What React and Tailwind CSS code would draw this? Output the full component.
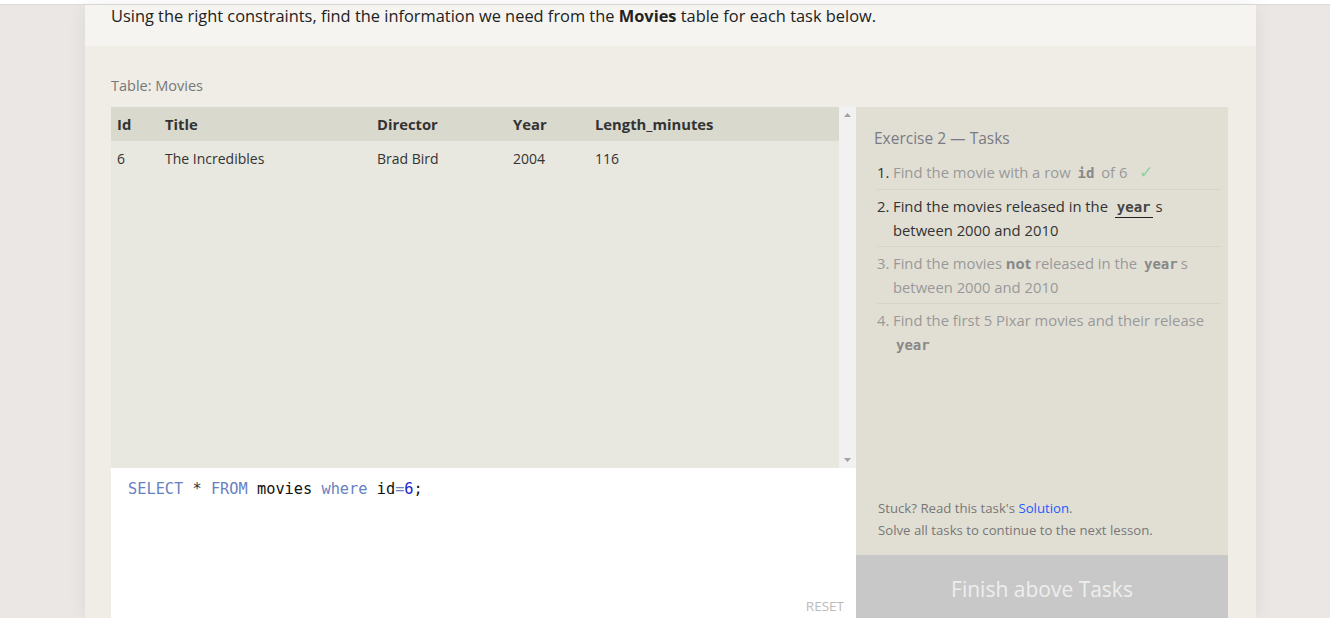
import React from "react";

const sans = { fontFamily: '"Open Sans", "Noto Sans", sans-serif' };
const mono = { fontFamily: '"DejaVu Sans Mono", "Liberation Mono", monospace' };

function Code({ children, className = "" }) {
  return (
    <span className={"font-bold text-[14px] leading-none " + className} style={mono}>
      {children}
    </span>
  );
}

export default function App() {
  return (
    <div className="w-[1330px] h-[618px] overflow-hidden bg-[#ebe7e4]" style={sans}>
      <div className="h-[5px] bg-white border-b border-[#dcdbd9]" />
      <div className="ml-[85px] w-[1171px] h-[613px] shadow-[0_0_18px_rgba(0,0,0,0.07)] flex flex-col">
        <div className="h-[41px] bg-[#f5f4f0] pl-[26px] text-[16.4px] leading-[22px] text-[#222]">
          Using the right constraints, find the information we need from the <b>Movies</b> table for each task below.
        </div>
        <div className="flex-1 bg-[#efede6] pl-[26px] pr-[28px] pt-[30px] flex flex-col">
          <div className="text-[14.5px] leading-[20px] text-[#777] h-[31px]">Table: Movies</div>
          <div className="flex flex-1">
            <div className="w-[745px] flex flex-col">
              <div className="h-[361px] flex bg-[#e8e7e0]">
                <div className="flex-1">
                  <table className="w-full text-[14px] text-[#333] border-collapse">
                    <thead>
                      <tr className="bg-[#d9d9cd] h-[34px] text-left text-[14.8px]">
                        <th className="w-[48px] pl-[6px] font-bold">Id</th>
                        <th className="w-[212px] pl-[6px] font-bold">Title</th>
                        <th className="w-[136px] pl-[6px] font-bold">Director</th>
                        <th className="w-[82px] pl-[6px] font-bold">Year</th>
                        <th className="pl-[6px] font-bold">Length_minutes</th>
                      </tr>
                    </thead>
                    <tbody>
                      <tr className="h-[34px]">
                        <td className="pl-[6px]">6</td>
                        <td className="pl-[6px]">The Incredibles</td>
                        <td className="pl-[6px]">Brad Bird</td>
                        <td className="pl-[6px]">2004</td>
                        <td className="pl-[6px]">116</td>
                      </tr>
                    </tbody>
                  </table>
                </div>
                <div className="w-[17px] bg-[#f1f1f1] flex flex-col justify-between items-center py-[6px]">
                  <svg width="7" height="4" viewBox="0 0 7 4"><path d="M0 4 L3.5 0 L7 4Z" fill="#a3a3a3" /></svg>
                  <svg width="7" height="4" viewBox="0 0 7 4"><path d="M0 0 L3.5 4 L7 0Z" fill="#a3a3a3" /></svg>
                </div>
              </div>
              <div className="flex-1 bg-white relative pl-[17px] pt-[11px]">
                <div className="text-[15.3px] leading-[20px]" style={mono}>
                  <span className="text-[#6a7fbf]">SELECT</span>
                  <span className="text-[#333]"> * </span>
                  <span className="text-[#6a7fbf]">FROM</span>
                  <span className="text-[#111]"> movies </span>
                  <span className="text-[#6a7fbf]">where</span>
                  <span className="text-[#111]"> id</span>
                  <span className="text-[#6a7fbf]">=</span>
                  <span className="text-[#2222cc]">6</span>
                  <span className="text-[#111]">;</span>
                </div>
                <div className="absolute right-[12px] bottom-[2px] text-[13.5px] text-[#bbb]">RESET</div>
              </div>
            </div>
            <div className="w-[372px] flex flex-col">
              <div className="flex-1 bg-[#e1dfd4] pl-[18px] pr-[7px] pt-[20px] flex flex-col">
                <div className="text-[15.5px] leading-[22px] text-[#7b7b85] mb-[11px]">Exercise 2 — Tasks</div>
                <ol className="text-[14.8px] leading-[24px]">
                  <li className="flex text-[#999] pb-[5px] border-b border-[#d6d4c9] ml-[3px]">
                    <span className="w-[16px] text-[#333]">1.</span>
                    <span>Find the movie with a row <Code className="text-[#888] mx-[3px]">id</Code> of 6 <span className="text-[#8fd19e] text-[17px] leading-none ml-[8px]">✓</span></span>
                  </li>
                  <li className="flex text-[#333] py-[4px] border-b border-[#d6d4c9] ml-[3px]">
                    <span className="w-[16px]">2.</span>
                    <span>Find the movies released in the <Code className="text-[#444] mx-[3px] border-b border-[#222] px-[2px] pb-[2px]">year</Code>s<br />between 2000 and 2010</span>
                  </li>
                  <li className="flex text-[#999] py-[4px] border-b border-[#d6d4c9] ml-[3px]">
                    <span className="w-[16px]">3.</span>
                    <span>Find the movies <b className="text-[#888]">not</b> released in the <Code className="text-[#888] mx-[3px]">year</Code>s<br />between 2000 and 2010</span>
                  </li>
                  <li className="flex text-[#999] py-[4px] ml-[3px]">
                    <span className="w-[16px]">4.</span>
                    <span>Find the first 5 Pixar movies and their release<br /><Code className="text-[#888] ml-[3px]">year</Code></span>
                  </li>
                </ol>
                <div className="mt-auto pb-[14px] pl-[4px] text-[13.2px] leading-[22px] text-[#777]">
                  <div>Stuck? Read this task's <span className="text-[#1a5cff]">Solution</span>.</div>
                  <div>Solve all tasks to continue to the next lesson.</div>
                </div>
              </div>
              <div className="h-[63px] bg-[#c8c8c8] flex items-center justify-center pt-[6px] text-[21px] text-[#eeeeee]">
                Finish above Tasks
              </div>
            </div>
          </div>
        </div>
      </div>
    </div>
  );
}
